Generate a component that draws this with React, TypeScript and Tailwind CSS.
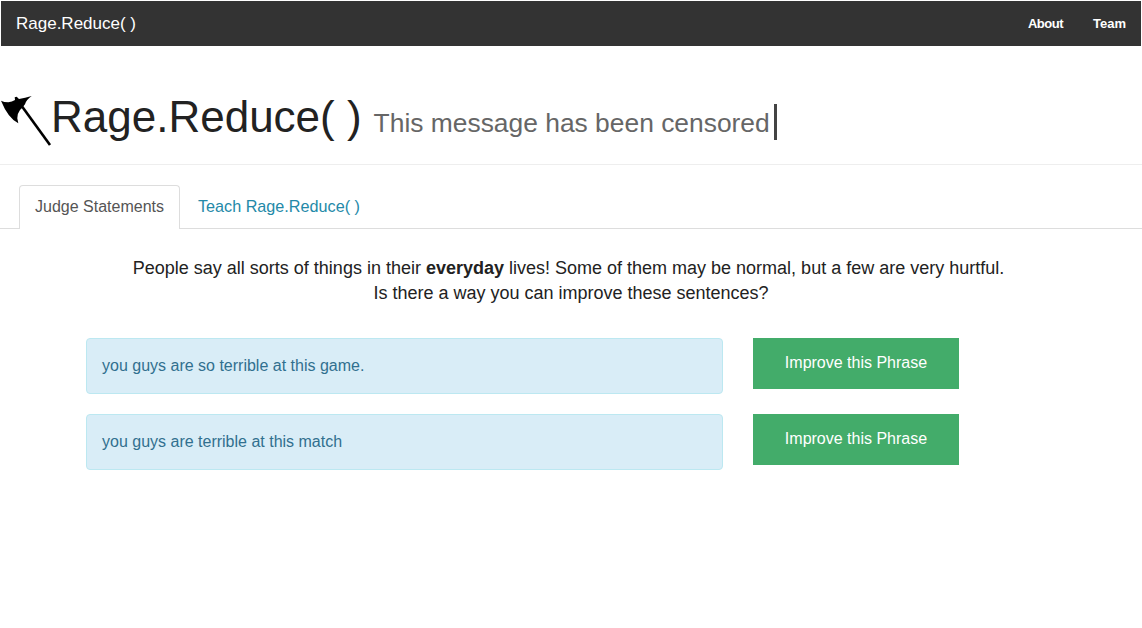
const Axe = () => (
  <svg width="52" height="52" viewBox="0 0 52 52" className="shrink-0">
    <path d="M1 6.700 Q4 8.300 8.300 8.300 Q12 8 15 6 L14.700 3.300 L16.700 2.700 L19 5 Q25 4 31.700 2 Q26 6 25 10.300 L22 14 L20 16 Q17 20 17.300 24.300 L18.300 29.300 Q8 24 1 6.700 Z" fill="#000" />
    <path d="M21 11 L50 51" stroke="#000" strokeWidth="2.600" fill="none" />
  </svg>
);

const phrases = ['you guys are so terrible at this game.', 'you guys are terrible at this match'];

export default function App() {
  return (
    <div className="min-h-[628px] bg-white font-['Liberation_Sans',Arial,sans-serif] text-[#222]">
      {/* Navbar */}
      <div className="pl-px pr-px pt-px">
        <nav className="flex h-[45px] items-center justify-between bg-[#333] pl-[15px] pr-[15px] text-white">
          <span className="text-[17px]">Rage.Reduce( )</span>
          <div className="flex gap-[30px] text-[13px] font-bold">
            <span className="tracking-[-0.5px]">About</span>
            <span>Team</span>
          </div>
        </nav>
      </div>

      {/* Header */}
      <header className="flex h-[119px] items-end border-b border-[#eee] pb-[18px]">
        <Axe />
        <h1 className="-mb-px -ml-px text-[44px] leading-[60px] text-[#222]">Rage.Reduce( )</h1>
        <span className="mb-px ml-3 text-[26.400px] leading-[44px] text-[#666]">This message has been censored</span>
        <span className="mb-[6px] ml-1 h-[36px] w-[3px] bg-[#444]" />
      </header>

      {/* Tabs */}
      <div className="mt-5 flex border-b border-[#ddd] pl-[19px]">
        <div className="-mb-px rounded-t border border-b-0 border-[#ddd] bg-white px-[15px] pt-[10px] pb-[11px] text-base leading-[22px] text-[#555]">
          Judge Statements
        </div>
        <div className="ml-[3px] px-[15px] pt-[10px] pb-[11px] text-[16.200px] leading-[22px] text-[#2489a8]">Teach Rage.Reduce( )</div>
      </div>

      <p className="mt-[27px] w-[1137px] text-center text-[18px] leading-[25px] text-[#222]">
        People say all sorts of things in their <b>everyday</b> lives! Some of them may be normal, but a few are very hurtful.
        <br />
        <span className="pl-[5px]">Is there a way you can improve these sentences?</span>
      </p>

      {/* Phrases */}
      <div className="mt-[32px] flex flex-col gap-5 pl-[86px]">
        {phrases.map((phrase) => (
          <div key={phrase} className="flex items-start gap-[30px]">
            <div className="flex h-[56px] w-[637px] items-center rounded border border-[#bce8f1] bg-[#d9edf7] px-[15px] text-base text-[#31708f]">
              {phrase}
            </div>
            <button className="h-[51px] w-[206px] bg-[#43ac6a] pb-[2px] text-base text-white">Improve this Phrase</button>
          </div>
        ))}
      </div>
    </div>
  );
}
